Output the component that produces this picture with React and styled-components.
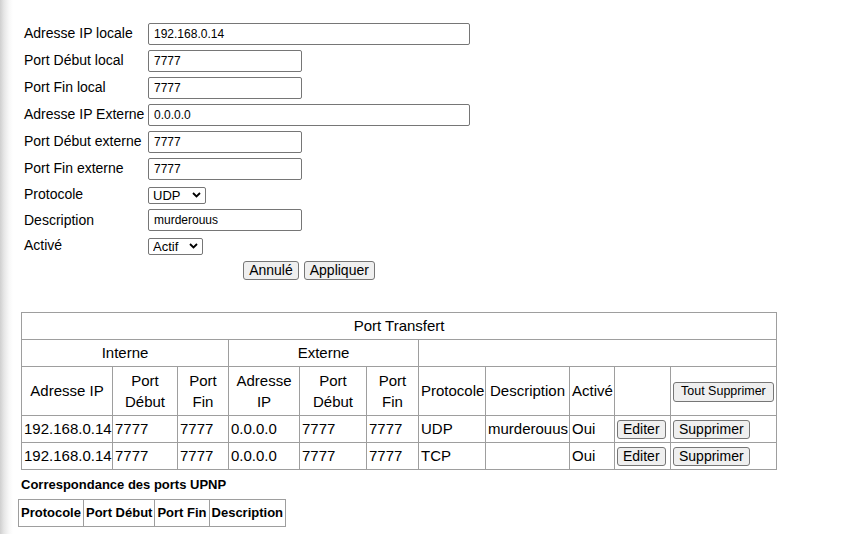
import styled, { createGlobalStyle } from 'styled-components';

const GlobalStyle = createGlobalStyle`
  * {
    box-sizing: border-box;
  }

  html, body {
    margin: 0;
    padding: 0;
  }

  body {
    font-family: "Liberation Sans", Arial, Helvetica, sans-serif;
    color: #000;
    background: linear-gradient(to right, #cfcfcf 0px, #e6e6e6 4px, #f8f8f8 9px, #ffffff 13px) no-repeat;
    background-color: #fff;
    min-height: 534px;
  }
`;

const Page = styled.div`
  padding: 20px 0 0 18px;
`;

const Form = styled.div`
  display: grid;
  grid-template-columns: 124px 322px;
  padding-left: 6px;
`;

const Label = styled.div`
  display: flex;
  align-items: center;
  height: ${p => (p.$short ? '25.5px' : '27px')};
  font-size: 14px;
  white-space: nowrap;
  padding-bottom: 1px;
`;

const Field = styled.div`
  display: flex;
  align-items: center;
  height: ${p => (p.$short ? '25.5px' : '27px')};
`;

const TextInput = styled.input`
  width: ${p => (p.$wide ? '322px' : '154px')};
  height: 22px;
  border: 1px solid #767676;
  border-radius: 2px;
  padding: 1px 5px;
  font-family: inherit;
  font-size: 12px;
  color: #000;
  background: #fff;
  outline: none;
`;

const SelectWrap = styled.span`
  position: relative;
  display: inline-block;

  svg {
    position: absolute;
    right: 5px;
    top: 6px;
    pointer-events: none;
  }
`;

const Select = styled.select`
  appearance: none;
  width: ${p => p.$w}px;
  height: 17px;
  border: 1px solid #767676;
  border-radius: 2px;
  padding: 0 0 0 4px;
  font-family: inherit;
  font-size: 13px;
  line-height: 15px;
  color: #000;
  background: #fff;
`;

const ButtonRow = styled.div`
  grid-column: 2;
  display: flex;
  justify-content: center;
  gap: 5px;
  padding-top: 2px;
  height: 27px;
`;

const Button = styled.button`
  font-family: inherit;
  font-size: ${p => (p.$small ? '12.5px' : '14px')};
  height: ${p => (p.$small ? '20px' : '19px')};
  padding: 0 ${p => (p.$small ? '7px' : '5px')};
  border: 1px solid #767676;
  border-radius: 3px;
  background: #efefef;
  color: #000;
  line-height: 1;
  cursor: pointer;
`;

const Table = styled.table`
  border-collapse: collapse;
  table-layout: fixed;
  width: 756px;
  margin: 26px 0 0 3px;
  font-size: 15px;

  td {
    border: 1px solid #9e9e9e;
    padding: 0 2px;
    line-height: 21px;
    white-space: nowrap;
  }
`;

const Row = styled.tr`
  height: ${p => p.$h || 27}px;
`;

const Head = styled.td`
  text-align: center;
  white-space: ${p => (p.$wrap ? 'normal' : 'nowrap')} !important;
`;

const Cell = styled.td`
  text-align: left;
  vertical-align: middle;
`;

const ButtonCell = styled.td`
  padding: 0 2px !important;

  button + button {
    margin-left: 5px;
  }
`;

const SubTitle = styled.div`
  font-weight: bold;
  font-size: 13px;
  margin: 4px 0 0 3px;
  height: 22px;
  display: flex;
  align-items: center;
`;

const UpnpTable = styled.table`
  border-collapse: collapse;
  margin-top: 3px;
  font-size: 13px;
  font-weight: bold;

  td {
    border: 1px solid #9e9e9e;
    padding: 0 2px;
    height: 27px;
    white-space: nowrap;
  }
`;

function Chevron() {
  return (
    <svg width="9" height="6" viewBox="0 0 9 6">
      <path d="M1 1 L4.5 4.5 L8 1" fill="none" stroke="#000" strokeWidth="1.8" />
    </svg>
  );
}

const fields = [
  { label: 'Adresse IP locale', value: '192.168.0.14', wide: true },
  { label: 'Port Début local', value: '7777' },
  { label: 'Port Fin local', value: '7777' },
  { label: 'Adresse IP Externe', value: '0.0.0.0', wide: true },
  { label: 'Port Début externe', value: '7777' },
  { label: 'Port Fin externe', value: '7777' },
];

const rules = [
  { ip: '192.168.0.14', start: '7777', end: '7777', extIp: '0.0.0.0', extStart: '7777', extEnd: '7777', proto: 'UDP', desc: 'murderouus', on: 'Oui' },
  { ip: '192.168.0.14', start: '7777', end: '7777', extIp: '0.0.0.0', extStart: '7777', extEnd: '7777', proto: 'TCP', desc: '', on: 'Oui' },
];

const widths = [91, 65, 51, 71, 67, 52, 67, 84, 45, 56, 106];

export default function App() {
  return (
    <>
      <GlobalStyle />
      <Page>
        <Form>
          {fields.map(f => (
            <>
              <Label key={f.label}>{f.label}</Label>
              <Field>
                <TextInput $wide={f.wide} defaultValue={f.value} />
              </Field>
            </>
          ))}
          <Label $short>Protocole</Label>
          <Field $short>
            <SelectWrap>
              <Select $w={58} defaultValue="UDP">
                <option>UDP</option>
                <option>TCP</option>
              </Select>
              <Chevron />
            </SelectWrap>
          </Field>
          <Label $short>Description</Label>
          <Field $short>
            <TextInput defaultValue="murderouus" />
          </Field>
          <Label $short>Activé</Label>
          <Field $short>
            <SelectWrap>
              <Select $w={55} defaultValue="Actif">
                <option>Actif</option>
                <option>Inactif</option>
              </Select>
              <Chevron />
            </SelectWrap>
          </Field>
          <ButtonRow>
            <Button>Annulé</Button>
            <Button>Appliquer</Button>
          </ButtonRow>
        </Form>

        <Table>
          <colgroup>
            {widths.map((w, i) => <col key={i} style={{ width: w }} />)}
          </colgroup>
          <tbody>
            <Row>
              <Head colSpan={11}>Port Transfert</Head>
            </Row>
            <Row>
              <Head colSpan={3}>Interne</Head>
              <Head colSpan={3}>Externe</Head>
              <Head colSpan={5}></Head>
            </Row>
            <Row $h={49}>
              <Head>Adresse IP</Head>
              <Head $wrap>Port Début</Head>
              <Head $wrap>Port Fin</Head>
              <Head $wrap>Adresse IP</Head>
              <Head $wrap>Port Début</Head>
              <Head $wrap>Port Fin</Head>
              <Head>Protocole</Head>
              <Head>Description</Head>
              <Head>Activé</Head>
              <Head></Head>
              <ButtonCell>
                <Button $small>Tout Supprimer</Button>
              </ButtonCell>
            </Row>
            {rules.map((r, i) => (
              <Row key={i}>
                <Cell>{r.ip}</Cell>
                <Cell>{r.start}</Cell>
                <Cell>{r.end}</Cell>
                <Cell>{r.extIp}</Cell>
                <Cell>{r.extStart}</Cell>
                <Cell>{r.extEnd}</Cell>
                <Cell>{r.proto}</Cell>
                <Cell>{r.desc}</Cell>
                <Cell>{r.on}</Cell>
                <ButtonCell>
                  <Button>Editer</Button>
                </ButtonCell>
                <ButtonCell>
                  <Button>Supprimer</Button>
                </ButtonCell>
              </Row>
            ))}
          </tbody>
        </Table>

        <SubTitle>Correspondance des ports UPNP</SubTitle>
        <UpnpTable>
          <tbody>
            <tr>
              <td>Protocole</td>
              <td>Port Début</td>
              <td>Port Fin</td>
              <td>Description</td>
            </tr>
          </tbody>
        </UpnpTable>
      </Page>
    </>
  );
}
